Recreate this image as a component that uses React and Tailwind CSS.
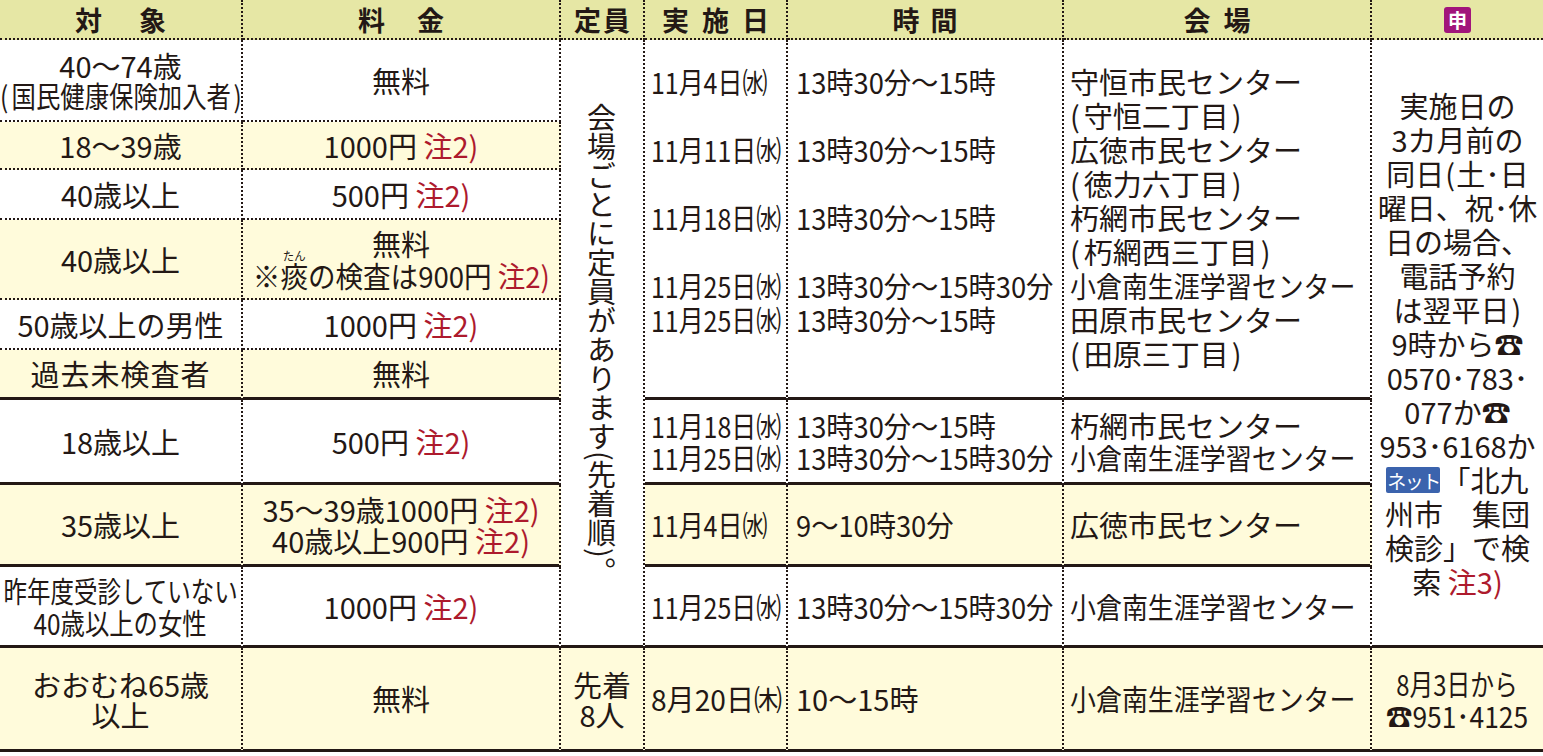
import React from "react";

const COL = ["", "col-start-1", "col-start-2", "col-start-3", "col-start-4", "col-start-5", "col-start-6", "col-start-7"];
const ROW = ["", "row-start-1", "row-start-2", "row-start-3", "row-start-4", "row-start-5", "row-start-6", "row-start-7", "row-start-8", "row-start-9", "row-start-10", "row-start-11"];
const SPAN = { 1: "", 6: "row-span-6", 9: "row-span-9" };
const BG = { w: "bg-white", y: "bg-[#fffbdb]", h: "bg-[#e6e7a5]" };
const ALIGN = {
  center: "flex flex-col items-center justify-center text-center",
  left: "flex flex-col items-start justify-center pl-[6px]",
  top: "flex flex-col items-start justify-start pl-[6px]",
};

function Cell({ c, r, span = 1, bg = "w", b = "dot", align = "center", className = "", children }) {
  const cls = [
    COL[c],
    ROW[r],
    SPAN[span],
    "border-[#231815] min-w-0",
    c < 7 ? "border-r-2 [border-right-style:dotted]" : "",
    b === "dot" ? "border-b-2 [border-bottom-style:dotted]" : "border-b-3",
    BG[bg],
    ALIGN[align],
    className,
  ].join(" ");
  return <div className={cls}>{children}</div>;
}

const LP = () => <span className="mr-[4px]">(</span>;
const RP = () => <span className="ml-[3px]">)</span>;
const N = ({ n = 2 }) => <span className="text-[#ad1a2d]">注{n})</span>;
const Tel = () => <span className="font-['Noto_Sans_CJK_JP','DejaVu_Sans',sans-serif]">☎</span>;
const Net = () => (
  <span className="inline-flex items-center justify-center w-[54px] h-[26px] mr-[1px] bg-[#3b63ad] rounded-[2px] text-white text-[19px] leading-none tracking-[-1.5px] align-[3px]">
    ネット
  </span>
);

const SC = {
  d: "inline-block origin-left scale-x-[0.86] whitespace-nowrap",
  d2: "inline-block origin-left scale-x-[0.97] whitespace-nowrap",
  t: "inline-block origin-left scale-x-[0.94] whitespace-nowrap",
  v: "inline-block origin-left scale-x-[0.895] whitespace-nowrap",
};
const Cond = ({ s, children }) => <span className={SC[s]}>{children}</span>;

const MC = {
  a: "inline-block scale-x-[0.81] whitespace-nowrap",
  b: "inline-block scale-x-[0.84] whitespace-nowrap",
  c: "inline-block scale-x-[0.82] whitespace-nowrap",
  e: "inline-block scale-x-[0.91] whitespace-nowrap",
  f: "inline-block scale-x-[0.95] whitespace-nowrap",
  g: "inline-block scale-x-[0.84] whitespace-nowrap",
};
const Mid = ({ k, children }) => (
  <div className="flex justify-center w-full">
    <span className={MC[k]}>{children}</span>
  </div>
);

const L = ({ children }) => <div className="h-[34px] leading-[34px] whitespace-nowrap">{children}</div>;

function Head({ c, gap, chars, children }) {
  return (
    <Cell c={c} r={1} bg="h" className="font-bold text-[27px] leading-none pt-[1px]">
      {children ? (
        children
      ) : (
        <div className={"flex " + gap}>
          {chars.map((ch, i) => (
            <span key={i}>{ch}</span>
          ))}
        </div>
      )}
    </Cell>
  );
}

export default function App() {
  const T1 = <Cond s="t">13時30分〜15時</Cond>;
  const T2 = <Cond s="t">13時30分〜15時30分</Cond>;
  const aDates = [
    <Cond s="d">11月4日㈬</Cond>,
    "",
    <Cond s="d">11月11日㈬</Cond>,
    "",
    <Cond s="d">11月18日㈬</Cond>,
    "",
    <Cond s="d">11月25日㈬</Cond>,
    <Cond s="d">11月25日㈬</Cond>,
    "",
  ];
  const aTimes = [T1, "", T1, "", T1, "", T2, T1, ""];
  const aVenues = [
    "守恒市民センター",
    <>
      <LP />守恒二丁目<RP />
    </>,
    "広徳市民センター",
    <>
      <LP />徳力六丁目<RP />
    </>,
    "朽網市民センター",
    <>
      <LP />朽網西三丁目<RP />
    </>,
    <Cond s="v">小倉南生涯学習センター</Cond>,
    "田原市民センター",
    <>
      <LP />田原三丁目<RP />
    </>,
  ];
  const apply = [
    "実施日の",
    "3カ月前の",
    <>
      同日<span className="mx-[1px]">(</span>土･日
    </>,
    "曜日、祝･休",
    "日の場合、",
    "電話予約",
    <>
      は翌平日<span className="ml-[2px]">)</span>
    </>,
    <>
      9時から<Tel />
    </>,
    "0570･783･",
    <>
      077か<Tel />
    </>,
    "953･6168か",
    <>
      <Net />「北九
    </>,
    "州市　集団",
    "検診」で検",
    <>
      索 <N n={3} />
    </>,
  ];

  return (
    <div className="w-[1543px] h-[756px] bg-white text-[#231815] font-['Noto_Sans_CJK_JP',sans-serif] text-[29px] leading-[31px] overflow-hidden">
      <div className="grid grid-cols-[243px_318px_84px_143px_276px_308px_171px] grid-rows-[40px_82px_48px_50px_80px_50px_50px_85px_82px_81px_104px]">
        {/* header */}
        <Head c={1} gap="gap-[37px]" chars={["対", "象"]} />
        <Head c={2} gap="gap-[32px]" chars={["料", "金"]} />
        <Head c={3} gap="gap-[2px]" chars={["定", "員"]} />
        <Head c={4} gap="gap-[13px]" chars={["実", "施", "日"]} />
        <Head c={5} gap="gap-[11px]" chars={["時", "間"]} />
        <Head c={6} gap="gap-[13px]" chars={["会", "場"]} />
        <Head c={7}>
          <span className="flex items-center justify-center w-[27px] h-[26px] rounded-[3px] bg-[#a1157b] text-white text-[19px] font-bold leading-none">
            申
          </span>
        </Head>

        {/* 対象 / 料金 */}
        <Cell c={1} r={2} className="leading-[30px]">
          <div>40〜74歳</div>
          <Mid k="g">
            <LP />国民健康保険加入者<RP />
          </Mid>
        </Cell>
        <Cell c={2} r={2}>無料</Cell>

        <Cell c={1} r={3} bg="y">18〜39歳</Cell>
        <Cell c={2} r={3} bg="y">
          <div>
            1000円 <N />
          </div>
        </Cell>

        <Cell c={1} r={4}>40歳以上</Cell>
        <Cell c={2} r={4}>
          <div>
            500円 <N />
          </div>
        </Cell>

        <Cell c={1} r={5} bg="y">40歳以上</Cell>
        <Cell c={2} r={5} bg="y" className="leading-[32px]">
          <div>無料</div>
          <Mid k="f">
            ※
            <span className="relative">
              痰
              <span className="absolute left-1/2 -translate-x-1/2 top-[-4px] text-[12px] leading-none whitespace-nowrap">たん</span>
            </span>
            の検査は900円 <N />
          </Mid>
        </Cell>

        <Cell c={1} r={6}>50歳以上の男性</Cell>
        <Cell c={2} r={6}>
          <div>
            1000円 <N />
          </div>
        </Cell>

        <Cell c={1} r={7} bg="y" b="solid" className="tracking-[1px]">過去未検査者</Cell>
        <Cell c={2} r={7} bg="y" b="solid">無料</Cell>

        <Cell c={1} r={8} b="solid">18歳以上</Cell>
        <Cell c={2} r={8} b="solid">
          <div>
            500円 <N />
          </div>
        </Cell>

        <Cell c={1} r={9} bg="y" b="solid">35歳以上</Cell>
        <Cell c={2} r={9} bg="y" b="solid">
          <div className="whitespace-nowrap">
            35〜39歳1000円 <N />
          </div>
          <div className="whitespace-nowrap">
            40歳以上900円 <N />
          </div>
        </Cell>

        <Cell c={1} r={10} b="solid" className="leading-[32px]">
          <Mid k="a">昨年度受診していない</Mid>
          <Mid k="b">40歳以上の女性</Mid>
        </Cell>
        <Cell c={2} r={10} b="solid">
          <div>
            1000円 <N />
          </div>
        </Cell>

        <Cell c={1} r={11} bg="y" b="solid" className="leading-[30px]">
          <div>おおむね65歳</div>
          <div>以上</div>
        </Cell>
        <Cell c={2} r={11} bg="y" b="solid">無料</Cell>

        {/* 定員 */}
        <Cell c={3} r={2} span={9} b="solid">
          <div className="[writing-mode:vertical-rl] whitespace-nowrap text-[29px] leading-[29px] mr-[2px] mt-[4px]">
            会場ごとに定員があります<span className="my-[2px]">(</span>先着順<span className="my-[2px]">)</span>。
          </div>
        </Cell>
        <Cell c={3} r={11} bg="y" b="solid" className="leading-[30px]">
          <div>先着</div>
          <div>8人</div>
        </Cell>

        {/* Block A */}
        <Cell c={4} r={2} span={6} b="solid" align="top" className="pt-[24px]">
          {aDates.map((d, i) => (
            <L key={i}>{d}</L>
          ))}
        </Cell>
        <Cell c={5} r={2} span={6} b="solid" align="top" className="pt-[24px] pl-[8px]">
          {aTimes.map((d, i) => (
            <L key={i}>{d}</L>
          ))}
        </Cell>
        <Cell c={6} r={2} span={6} b="solid" align="top" className="pt-[24px]">
          {aVenues.map((d, i) => (
            <L key={i}>{d}</L>
          ))}
        </Cell>

        {/* Block B */}
        <Cell c={4} r={8} b="solid" align="left" className="leading-[32px]">
          <div><Cond s="d">11月18日㈬</Cond></div>
          <div><Cond s="d">11月25日㈬</Cond></div>
        </Cell>
        <Cell c={5} r={8} b="solid" align="left" className="leading-[32px] pl-[8px]">
          <div>{T1}</div>
          <div>{T2}</div>
        </Cell>
        <Cell c={6} r={8} b="solid" align="left" className="leading-[32px]">
          <div className="whitespace-nowrap">朽網市民センター</div>
          <div><Cond s="v">小倉南生涯学習センター</Cond></div>
        </Cell>

        {/* Block C */}
        <Cell c={4} r={9} bg="y" b="solid" align="left">
          <div><Cond s="d">11月4日㈬</Cond></div>
        </Cell>
        <Cell c={5} r={9} bg="y" b="solid" align="left" className="pl-[8px]">
          <div><Cond s="t">9〜10時30分</Cond></div>
        </Cell>
        <Cell c={6} r={9} bg="y" b="solid" align="left">
          <div className="whitespace-nowrap">広徳市民センター</div>
        </Cell>

        {/* Block D */}
        <Cell c={4} r={10} b="solid" align="left">
          <div><Cond s="d">11月25日㈬</Cond></div>
        </Cell>
        <Cell c={5} r={10} b="solid" align="left" className="pl-[8px]">
          <div>{T2}</div>
        </Cell>
        <Cell c={6} r={10} b="solid" align="left">
          <div><Cond s="v">小倉南生涯学習センター</Cond></div>
        </Cell>

        {/* Block E */}
        <Cell c={4} r={11} bg="y" b="solid" align="left" className="pl-[3px]">
          <div><Cond s="d2">8月20日㈭</Cond></div>
        </Cell>
        <Cell c={5} r={11} bg="y" b="solid" align="left" className="pl-[8px]">
          <div className="whitespace-nowrap">10〜15時</div>
        </Cell>
        <Cell c={6} r={11} bg="y" b="solid" align="left">
          <div><Cond s="v">小倉南生涯学習センター</Cond></div>
        </Cell>

        {/* 申 */}
        <Cell c={7} r={2} span={9} b="solid">
          {apply.map((d, i) => (
            <L key={i}>{d}</L>
          ))}
        </Cell>
        <Cell c={7} r={11} bg="y" b="solid" className="leading-[32px]">
          <Mid k="c">8月3日から</Mid>
          <Mid k="e">
            <Tel />
            951･4125
          </Mid>
        </Cell>
      </div>
    </div>
  );
}
